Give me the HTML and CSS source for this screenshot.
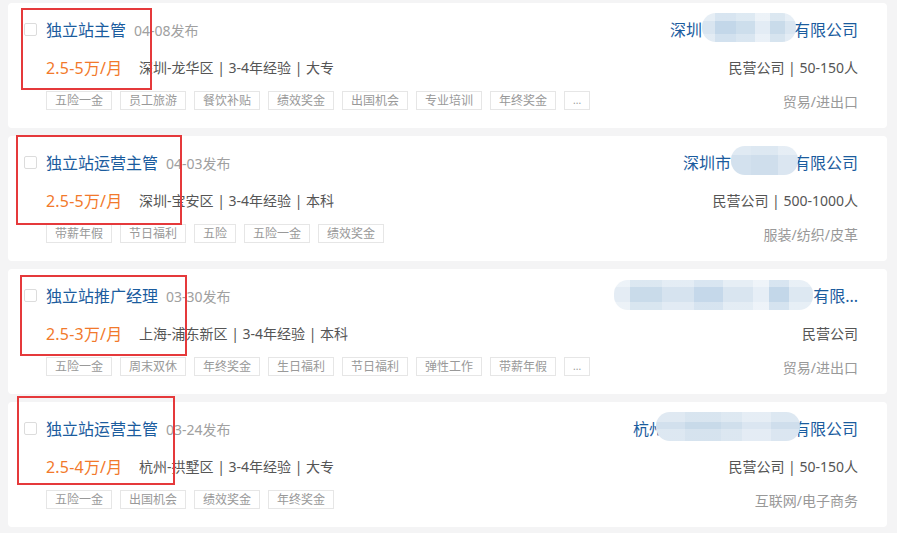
FILE: index.html
```html
<!DOCTYPE html>
<html lang="zh-CN">
<head>
<meta charset="utf-8">
<title>职位列表</title>
<link rel="stylesheet" href="styles.css">
</head>
<body>
<div class="list">

  <div class="card">
    <span class="chk"></span>
    <div class="main">
      <div class="row r1"><a class="job">独立站主管</a><span class="date">04-08发布</span></div>
      <div class="row r2"><span class="sal">2.5-5万/月</span><span class="loc">深圳-龙华区 | 3-4年经验 | 大专</span></div>
      <div class="row tags"><span class="tag">五险一金</span><span class="tag">员工旅游</span><span class="tag">餐饮补贴</span><span class="tag">绩效奖金</span><span class="tag">出国机会</span><span class="tag">专业培训</span><span class="tag">年终奖金</span><span class="tag more">...</span></div>
    </div>
    <div class="side">
      <div class="row r1"><a class="co">深圳<span class="blur b1"></span>有限公司</a></div>
      <div class="row r2 info">民营公司 | 50-150人</div>
      <div class="row tags ind">贸易/进出口</div>
    </div>
    <span class="mark m1"></span>
  </div>

  <div class="card">
    <span class="chk"></span>
    <div class="main">
      <div class="row r1"><a class="job">独立站运营主管</a><span class="date">04-03发布</span></div>
      <div class="row r2"><span class="sal">2.5-5万/月</span><span class="loc">深圳-宝安区 | 3-4年经验 | 本科</span></div>
      <div class="row tags"><span class="tag">带薪年假</span><span class="tag">节日福利</span><span class="tag">五险</span><span class="tag">五险一金</span><span class="tag">绩效奖金</span></div>
    </div>
    <div class="side">
      <div class="row r1"><a class="co">深圳市<span class="blur b2"></span>有限公司</a></div>
      <div class="row r2 info">民营公司 | 500-1000人</div>
      <div class="row tags ind">服装/纺织/皮革</div>
    </div>
    <span class="mark m2"></span>
  </div>

  <div class="card">
    <span class="chk"></span>
    <div class="main">
      <div class="row r1"><a class="job">独立站推广经理</a><span class="date">03-30发布</span></div>
      <div class="row r2"><span class="sal">2.5-3万/月</span><span class="loc">上海-浦东新区 | 3-4年经验 | 本科</span></div>
      <div class="row tags"><span class="tag">五险一金</span><span class="tag">周末双休</span><span class="tag">年终奖金</span><span class="tag">生日福利</span><span class="tag">节日福利</span><span class="tag">弹性工作</span><span class="tag">带薪年假</span><span class="tag more">...</span></div>
    </div>
    <div class="side">
      <div class="row r1"><a class="co"><span class="blur b3"></span>有限...</a></div>
      <div class="row r2 info">民营公司</div>
      <div class="row tags ind">贸易/进出口</div>
    </div>
    <span class="mark m3"></span>
  </div>

  <div class="card">
    <span class="chk"></span>
    <div class="main">
      <div class="row r1"><a class="job">独立站运营主管</a><span class="date">03-24发布</span></div>
      <div class="row r2"><span class="sal">2.5-4万/月</span><span class="loc">杭州-拱墅区 | 3-4年经验 | 大专</span></div>
      <div class="row tags"><span class="tag">五险一金</span><span class="tag">出国机会</span><span class="tag">绩效奖金</span><span class="tag">年终奖金</span></div>
    </div>
    <div class="side">
      <div class="row r1"><a class="co">杭州<span class="blur b4"></span>有限公司</a></div>
      <div class="row r2 info">民营公司 | 50-150人</div>
      <div class="row tags ind">互联网/电子商务</div>
    </div>
    <span class="mark m4"></span>
  </div>

</div>
</body>
</html>
```
FILE: styles.css
```css
* { box-sizing: border-box; }
html, body { margin: 0; padding: 0; }
body {
  background: #f4f4f5;
  font-family: "Noto Sans", "Noto Sans CJK SC", sans-serif;
  color: #555;
  width: 897px;
  height: 533px;
  overflow: hidden;
}
.list {
  padding: 3px 10px 0 8px;
  display: flex;
  flex-direction: column;
  gap: 8px;
}
.card {
  position: relative;
  background: #fff;
  border-radius: 4px;
  height: 125px;
  padding: 15px 29px 0 16px;
  display: flex;
  align-items: flex-start;
}
.chk {
  width: 13px;
  height: 13px;
  border: 1px solid #dcdcdc;
  border-radius: 2px;
  margin: 5px 9px 0 0;
  flex: none;
  background: #fff;
}
.main { flex: 1; display: flex; flex-direction: column; }
.side { display: flex; flex-direction: column; align-items: flex-end; }
.row { display: flex; align-items: center; white-space: nowrap; }
.r1 { height: 24px; }
.r2 { height: 24px; margin-top: 13px; }
.tags { height: 19px; margin-top: 12px; gap: 8px; }
.job, .co {
  color: #1b5c9e;
  font-size: 16px;
  line-height: 24px;
  text-decoration: none;
}
.date { color: #a0a0a0; font-size: 14px; margin-left: 8px; }
.sal { color: #f2792b; font-size: 16px; width: 93px; flex: none; letter-spacing: 0.2px; }
.loc { color: #555; font-size: 14px; }
.tag {
  height: 19px;
  line-height: 17px;
  border: 1px solid #e6e6e6;
  padding: 0 8px;
  font-size: 12px;
  color: #999;
}
.tag.more { padding: 0 8px; font-size: 10px; }
.info { color: #555; font-size: 14px; }
.ind { color: #999; font-size: 14px; }
.co { display: flex; align-items: center; }
.blur {
  position: relative;
  z-index: 1;
  display: inline-block;
  height: 29px;
  border-radius: 14px;
  margin-top: -5px;
  background:
    linear-gradient(to bottom, rgba(255,255,255,.35) 0 28%, rgba(255,255,255,0) 28% 72%, rgba(255,255,255,.25) 72%),
    linear-gradient(to right, #d9e5f0 0 14%, #c3d7e9 14% 36%, #cddeec 36% 56%, #e3ecf5 56% 72%, #c9dbea 72% 88%, #dae6f1 88%);
}
.b1 { width: 94px; margin-right: -2px; }
.b2 { width: 67px; margin-right: -4px; background:
    linear-gradient(to bottom, rgba(255,255,255,.3) 0 30%, rgba(255,255,255,0) 30%),
    linear-gradient(to right, #d3e1ee 0 30%, #cfdeec 30% 70%, #dbe6f1 70%); }
.b3 { width: 199px; height: 30px; margin-top: -2px; background:
    linear-gradient(to bottom, rgba(255,255,255,.35) 0 25%, rgba(255,255,255,0) 25% 75%, rgba(255,255,255,.3) 75%),
    linear-gradient(to right, #e4ecf4 0 8%, #c9dbea 8% 24%, #d6e3ef 24% 40%, #c5d8ea 40% 55%, #d9e5f0 55% 70%, #e6eef6 70% 78%, #c3d7e9 78% 88%, #dde8f2 88%); }
.b4 { width: 144px; margin-left: -9px; margin-right: -6px; background:
    linear-gradient(to bottom, rgba(255,255,255,.3) 0 35%, rgba(255,255,255,0) 35% 60%, rgba(255,255,255,.25) 60%),
    linear-gradient(to right, #d2e0ed 0 20%, #c8dae9 20% 45%, #d0dfec 45% 60%, #dbe6f1 60% 80%, #cfdeec 80%); }
.mark {
  position: absolute;
  z-index: 2;
  border: 2px solid #e5393b;
  pointer-events: none;
}
.m1 { left: 13px; top: 5px; width: 131px; height: 82px; }
.m2 { left: 8px; top: -1px; width: 166px; height: 90px; }
.m3 { left: 12px; top: 6px; width: 167px; height: 81px; }
.m4 { left: 9px; top: -6px; width: 158px; height: 89px; }
```
